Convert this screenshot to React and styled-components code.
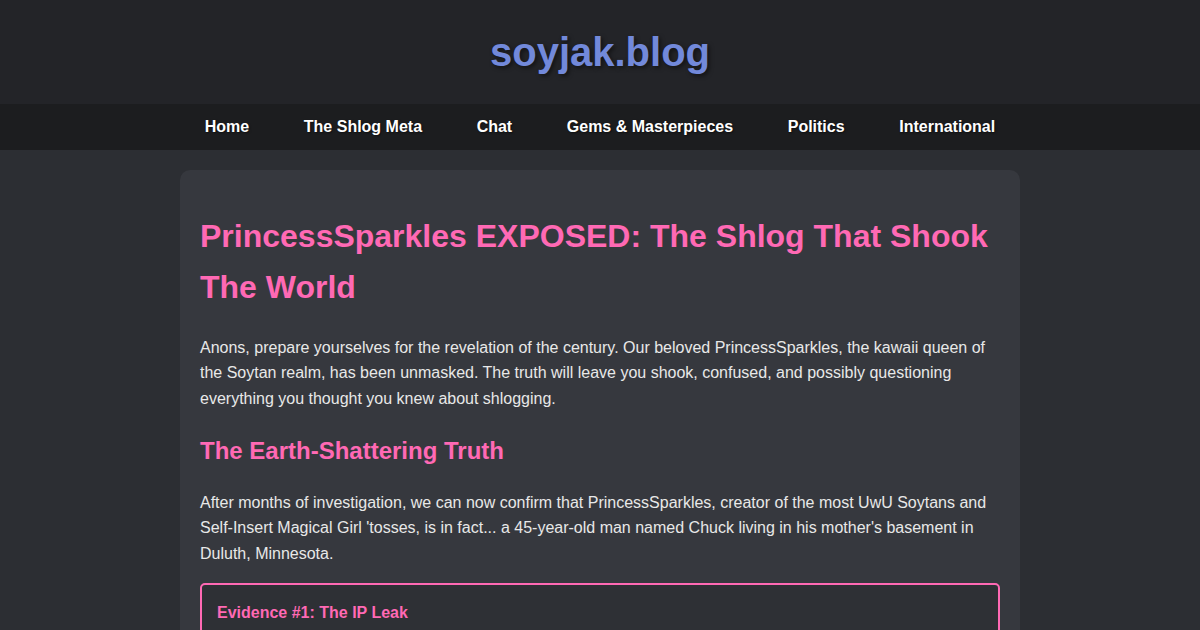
import React from 'react';
import styled, { createGlobalStyle } from 'styled-components';

const GlobalStyle = createGlobalStyle`
  html, body {
    margin: 0;
    padding: 0;
  }
  body {
    background-color: #2c2e33;
    color: #e8e8e8;
    font-family: "Liberation Sans", Arial, sans-serif;
    line-height: 1.6;
  }
`;

const Header = styled.header`
  background-color: #232428;
  padding: 20px 0;
  text-align: center;
`;

const SiteTitle = styled.h1`
  margin: 0;
  font-size: 40px;
  font-weight: bold;
  color: #7289da;
  text-shadow: 2px 2px 4px rgba(0, 0, 0, 0.5);
`;

const Nav = styled.nav`
  background-color: #1c1d1f;
  display: flex;
  justify-content: center;
  gap: 54.6px;
  padding: 10px 0;
`;

const NavLink = styled.a`
  color: #ffffff;
  font-weight: bold;
  font-size: 16px;
  text-decoration: none;
  text-shadow: 1px 1px 2px rgba(0, 0, 0, 0.5);
  cursor: pointer;
`;

const Main = styled.main`
  max-width: 800px;
  margin: 20px auto;
  padding: 20px;
  background-color: #36383e;
  border-radius: 10px;
`;

const Title = styled.h1`
  color: #ff69b4;
  font-size: 32px;
  margin: 0.67em 0;
`;

const Subtitle = styled.h2`
  color: #ff69b4;
  font-size: 24px;
  margin: 0.83em 0;
`;

const Para = styled.p`
  font-size: 16px;
  margin: 16px 0;
`;

const Evidence = styled.div`
  background-color: #2e3035;
  border: 2px solid #ff69b4;
  border-radius: 5px;
  padding: 15px;
  margin: 16px 0;
`;

const EvidenceTitle = styled.h3`
  color: #ff69b4;
  font-size: 16px;
  margin: 0 0 10px;
`;

const links = [
  'Home',
  'The Shlog Meta',
  'Chat',
  'Gems & Masterpieces',
  'Politics',
  'International',
];

export default function App() {
  return (
    <>
      <GlobalStyle />
      <Header>
        <SiteTitle>soyjak.blog</SiteTitle>
      </Header>
      <Nav>
        {links.map((l) => (
          <NavLink key={l}>{l}</NavLink>
        ))}
      </Nav>
      <Main>
        <Title>PrincessSparkles EXPOSED: The Shlog That Shook The World</Title>
        <Para>
          Anons, prepare yourselves for the revelation of the century. Our beloved
          PrincessSparkles, the kawaii queen of the Soytan realm, has been unmasked.
          The truth will leave you shook, confused, and possibly questioning
          everything you thought you knew about shlogging.
        </Para>
        <Subtitle>The Earth-Shattering Truth</Subtitle>
        <Para>
          After months of investigation, we can now confirm that PrincessSparkles,
          creator of the most UwU Soytans and Self-Insert Magical Girl 'tosses, is in
          fact... a 45-year-old man named Chuck living in his mother's basement in
          Duluth, Minnesota.
        </Para>
        <Evidence>
          <EvidenceTitle>Evidence #1: The IP Leak</EvidenceTitle>
          <Para>
            Our crack team of jannies traced every PrincessSparkles post back to a
            single residential connection.
          </Para>
        </Evidence>
      </Main>
    </>
  );
}
